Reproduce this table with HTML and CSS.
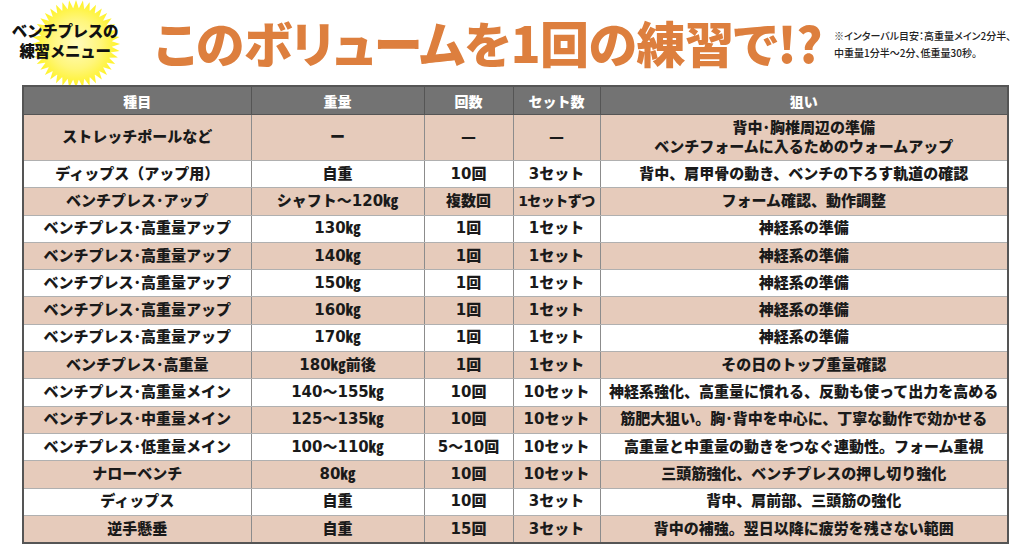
FILE: index.html
```html
<!DOCTYPE html>
<html lang="ja">
<head>
<meta charset="utf-8">
<title>ベンチプレスの練習メニュー</title>
<link rel="stylesheet" href="styles.css">
</head>
<body>
<header class="top">
  <div class="badge">
    <svg class="burst" viewBox="0 0 90 90" aria-hidden="true">
      <defs>
        <radialGradient id="yg" cx="45" cy="45" r="45" gradientUnits="userSpaceOnUse">
          <stop offset="0" stop-color="#fffbc0"/>
          <stop offset="0.55" stop-color="#fff67a"/>
          <stop offset="1" stop-color="#fff21c"/>
        </radialGradient>
        <g id="s4">
          <polygon points="45,1 42,10 48,10"/>
          <polygon points="45,1 42,10 48,10" transform="rotate(9 45 45)"/>
          <polygon points="45,1 42,10 48,10" transform="rotate(18 45 45)"/>
          <polygon points="45,1 42,10 48,10" transform="rotate(27 45 45)"/>
          <polygon points="45,1 42,10 48,10" transform="rotate(36 45 45)"/>
        </g>
      </defs>
      <g fill="url(#yg)">
        <circle cx="45" cy="45" r="36"/>
        <use href="#s4"/>
        <use href="#s4" transform="rotate(45 45 45)"/>
        <use href="#s4" transform="rotate(90 45 45)"/>
        <use href="#s4" transform="rotate(135 45 45)"/>
        <use href="#s4" transform="rotate(180 45 45)"/>
        <use href="#s4" transform="rotate(225 45 45)"/>
        <use href="#s4" transform="rotate(270 45 45)"/>
        <use href="#s4" transform="rotate(315 45 45)"/>
      </g>
    </svg>
    <p class="badge-text">ベンチプレスの<br>練習メニュー</p>
  </div>
  <h1 class="title">このボリュームを1回の練習で!?</h1>
  <p class="note">※インターバル目安：高重量メイン2分半、<br>中重量1分半〜2分、低重量30秒。</p>
</header>

<table class="menu">
  <colgroup>
    <col class="c1"><col class="c2"><col class="c3"><col class="c4"><col class="c5">
  </colgroup>
  <thead>
    <tr><th>種目</th><th>重量</th><th>回数</th><th>セット数</th><th>狙い</th></tr>
  </thead>
  <tbody>
    <tr class="pink tall"><td>ストレッチポールなど</td><td>ー</td><td>—</td><td>—</td><td>背中･胸椎周辺の準備<br>ベンチフォームに入るためのウォームアップ</td></tr>
    <tr><td>ディップス（アップ用）</td><td>自重</td><td>10回</td><td>3セット</td><td>背中、肩甲骨の動き、ベンチの下ろす軌道の確認</td></tr>
    <tr class="pink"><td>ベンチプレス･アップ</td><td>シャフト〜120㎏</td><td>複数回</td><td class="sm">1セットずつ</td><td>フォーム確認、動作調整</td></tr>
    <tr><td>ベンチプレス･高重量アップ</td><td>130㎏</td><td>1回</td><td>1セット</td><td>神経系の準備</td></tr>
    <tr class="pink"><td>ベンチプレス･高重量アップ</td><td>140㎏</td><td>1回</td><td>1セット</td><td>神経系の準備</td></tr>
    <tr><td>ベンチプレス･高重量アップ</td><td>150㎏</td><td>1回</td><td>1セット</td><td>神経系の準備</td></tr>
    <tr class="pink"><td>ベンチプレス･高重量アップ</td><td>160㎏</td><td>1回</td><td>1セット</td><td>神経系の準備</td></tr>
    <tr><td>ベンチプレス･高重量アップ</td><td>170㎏</td><td>1回</td><td>1セット</td><td>神経系の準備</td></tr>
    <tr class="pink"><td>ベンチプレス･高重量</td><td>180㎏前後</td><td>1回</td><td>1セット</td><td>その日のトップ重量確認</td></tr>
    <tr><td>ベンチプレス･高重量メイン</td><td>140〜155㎏</td><td>10回</td><td>10セット</td><td>神経系強化、高重量に慣れる、反動も使って出力を高める</td></tr>
    <tr class="pink"><td>ベンチプレス･中重量メイン</td><td>125〜135㎏</td><td>10回</td><td>10セット</td><td>筋肥大狙い。胸･背中を中心に、丁寧な動作で効かせる</td></tr>
    <tr><td>ベンチプレス･低重量メイン</td><td>100〜110㎏</td><td>5〜10回</td><td>10セット</td><td>高重量と中重量の動きをつなぐ連動性。フォーム重視</td></tr>
    <tr class="pink"><td>ナローベンチ</td><td>80㎏</td><td>10回</td><td>10セット</td><td>三頭筋強化、ベンチプレスの押し切り強化</td></tr>
    <tr><td>ディップス</td><td>自重</td><td>10回</td><td>3セット</td><td>背中、肩前部、三頭筋の強化</td></tr>
    <tr class="pink"><td>逆手懸垂</td><td>自重</td><td>15回</td><td>3セット</td><td>背中の補強。翌日以降に疲労を残さない範囲</td></tr>
  </tbody>
</table>
</body>
</html>
```

FILE: styles.css
```css
html, body {
  margin: 0;
  padding: 0;
  background: #ffffff;
}

body {
  width: 1024px;
  height: 557px;
  overflow: hidden;
  font-family: "Noto Sans CJK JP", "Noto Sans", sans-serif;
  color: #111111;
}

.top {
  display: flex;
  align-items: flex-start;
  height: 85px;
}

.badge {
  position: relative;
  flex: none;
  width: 155px;
  height: 85px;
}

.burst {
  position: absolute;
  left: 31px;
  top: -1px;
  width: 90px;
  height: 90px;
}

.badge-text {
  position: relative;
  margin: 0;
  padding-top: 20px;
  width: 130px;
  text-align: center;
  font-size: 15.5px;
  line-height: 20px;
  font-weight: 900;
  letter-spacing: -0.3px;
  color: #111111;
}

.title {
  margin: 0;
  padding-top: 17px;
  font-size: 49px;
  line-height: 1;
  font-weight: 900;
  color: #dd7f3e;
  font-feature-settings: "palt";
  letter-spacing: -0.5px;
  white-space: nowrap;
}

.note {
  margin: 0 0 0 12px;
  padding-top: 27px;
  font-size: 10px;
  line-height: 17px;
  font-weight: 500;
  color: #222222;
  white-space: nowrap;
  font-feature-settings: "palt";
}

.menu {
  position: relative;
  margin-left: 22px;
  width: 987px;
  table-layout: fixed;
  border-collapse: collapse;
  border: 2px solid #555555;
  background: #ffffff;
}

.c1 { width: 228px; }
.c2 { width: 173px; }
.c3 { width: 89px; }
.c4 { width: 87px; }
.c5 { width: auto; }

.menu th {
  height: 27px;
  padding: 0;
  background: #737373;
  color: #ffffff;
  font-size: 14px;
  font-weight: 900;
  border-left: 1px solid #555555;
  border-bottom: 1px solid #555555;
}

.menu td {
  height: 26.3px;
  padding: 0;
  text-align: center;
  font-family: "DejaVu Sans", "Noto Sans CJK JP", sans-serif;
  font-size: 15px;
  line-height: 19px;
  font-weight: 900;
  color: #1a1a1a;
  border-left: 1px solid #8c8c8c;
  border-bottom: 1.5px solid #b0b0b0;
  white-space: nowrap;
}

.menu tr.tall td {
  height: 45px;
}

.menu tr.pink td {
  background: #e6cbbb;
}

.menu td.sm {
  font-size: 14px;
  letter-spacing: -0.5px;
}
```
